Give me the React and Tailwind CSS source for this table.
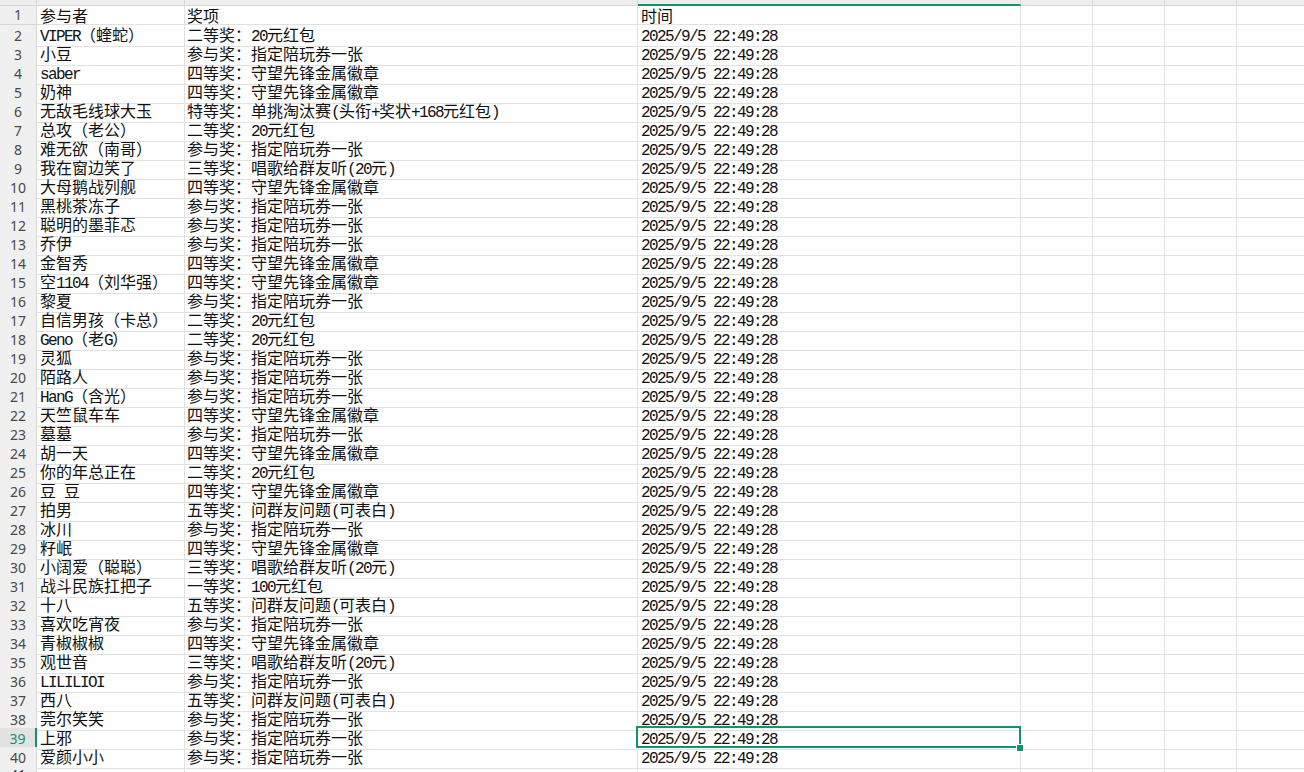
import React from "react";

const rows = [
  ["参与者", "奖项", "时间"],
  ["VIPER（蝰蛇）", "二等奖：20元红包"],
  ["小豆", "参与奖：指定陪玩券一张"],
  ["saber", "四等奖：守望先锋金属徽章"],
  ["奶神", "四等奖：守望先锋金属徽章"],
  ["无敌毛线球大玉", "特等奖：单挑淘汰赛(头衔+奖状+168元红包)"],
  ["总攻（老公）", "二等奖：20元红包"],
  ["难无欲（南哥）", "参与奖：指定陪玩券一张"],
  ["我在窗边笑了", "三等奖：唱歌给群友听(20元)"],
  ["大母鹅战列舰", "四等奖：守望先锋金属徽章"],
  ["黑桃茶冻子", "参与奖：指定陪玩券一张"],
  ["聪明的墨菲忑", "参与奖：指定陪玩券一张"],
  ["乔伊", "参与奖：指定陪玩券一张"],
  ["金智秀", "四等奖：守望先锋金属徽章"],
  ["空1104（刘华强）", "四等奖：守望先锋金属徽章"],
  ["黎夏", "参与奖：指定陪玩券一张"],
  ["自信男孩（卡总）", "二等奖：20元红包"],
  ["Geno（老G）", "二等奖：20元红包"],
  ["灵狐", "参与奖：指定陪玩券一张"],
  ["陌路人", "参与奖：指定陪玩券一张"],
  ["HanG（含光）", "参与奖：指定陪玩券一张"],
  ["天竺鼠车车", "四等奖：守望先锋金属徽章"],
  ["墓墓", "参与奖：指定陪玩券一张"],
  ["胡一天", "四等奖：守望先锋金属徽章"],
  ["你的年总正在", "二等奖：20元红包"],
  ["豆 豆", "四等奖：守望先锋金属徽章"],
  ["拍男", "五等奖：问群友问题(可表白)"],
  ["冰川", "参与奖：指定陪玩券一张"],
  ["籽岷", "四等奖：守望先锋金属徽章"],
  ["小阔爱（聪聪）", "三等奖：唱歌给群友听(20元)"],
  ["战斗民族扛把子", "一等奖：100元红包"],
  ["十八", "五等奖：问群友问题(可表白)"],
  ["喜欢吃宵夜", "参与奖：指定陪玩券一张"],
  ["青椒椒椒", "四等奖：守望先锋金属徽章"],
  ["观世音", "三等奖：唱歌给群友听(20元)"],
  ["LILILIOI", "参与奖：指定陪玩券一张"],
  ["西八", "五等奖：问群友问题(可表白)"],
  ["莞尔笑笑", "参与奖：指定陪玩券一张"],
  ["上邪", "参与奖：指定陪玩券一张"],
  ["爱颜小小", "参与奖：指定陪玩券一张"],
  ["", ""],
];

const TIME = "2025/9/5 22:49:28";

function Txt({ s }) {
  const parts = s.split(/([\x20-\x7E]+)/).filter((p) => p.length > 0);
  return (
    <span className="whitespace-pre">
      {parts.map((p, i) =>
        /^[\x20-\x7E]+$/.test(p) ? (
          <span key={i} className="font-['Liberation_Mono',monospace] tracking-[-1.6px]">
            {p}
          </span>
        ) : (
          <span key={i}>{p}</span>
        )
      )}
    </span>
  );
}

const GRID = "grid grid-cols-[37px_148px_453px_383px_72px_72px_72px_1fr]";

export default function App() {
  return (
    <div className="relative w-[1304px] h-[772px] overflow-hidden bg-white font-['Noto_Sans_CJK_SC',sans-serif] text-[16px] text-[#111]">
      <div className={`${GRID} h-[6px] bg-[#eeeeee]`}>
        <div className="border-r border-b border-[#d6d6d6]" />
        <div className="border-r border-b border-[#d6d6d6]" />
        <div className="border-r border-b border-[#d6d6d6]" />
        <div className="border-r border-[#d6d6d6] border-b-2 border-b-[#13936a]" />
        <div className="border-r border-b border-[#d6d6d6]" />
        <div className="border-r border-b border-[#d6d6d6]" />
        <div className="border-r border-b border-[#d6d6d6]" />
        <div className="border-b border-[#d6d6d6]" />
      </div>

      {rows.map((r, i) => {
        const n = i + 1;
        const sel = n === 39;
        const time = i === 0 ? "时间" : r[0] === "" ? "" : TIME;
        return (
          <div key={n} className={`${GRID} h-[19px] leading-[18px]`}>
            <div
              className={`flex items-center justify-center border-b border-[#d8d8d8] font-['Noto_Sans',sans-serif] text-[14px] ${
                sel
                  ? "bg-[#e2e2e2] text-[#13936a] border-r-2 border-r-[#13936a]"
                  : "bg-[#f0f0f0] text-[#4a4a4a] border-r border-r-[#d8d8d8]"
              }`}
            >
              {n}
            </div>
            <div className="border-r border-b border-[#e1e1e1] pl-[3px]">
              <Txt s={r[0]} />
            </div>
            <div className="border-r border-b border-[#e1e1e1] pl-[2px]">
              <Txt s={r[1]} />
            </div>
            <div className="border-r border-b border-[#e1e1e1] pl-[3px]">
              <Txt s={time} />
            </div>
            <div className="border-r border-b border-[#e1e1e1]" />
            <div className="border-r border-b border-[#e1e1e1]" />
            <div className="border-r border-b border-[#e1e1e1]" />
            <div className="border-b border-[#e1e1e1]" />
          </div>
        );
      })}

      <div className="absolute left-[636px] top-[726px] w-[385px] h-[22px] border-2 border-[#13936a] pointer-events-none" />
      <div className="absolute left-[1016px] top-[744px] w-[6px] h-[6px] bg-[#13936a] border border-white box-content" />
    </div>
  );
}
